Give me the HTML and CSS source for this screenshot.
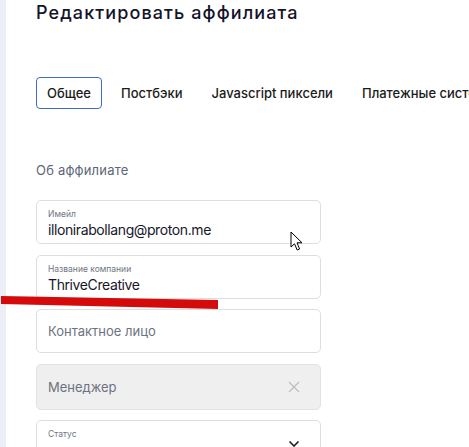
FILE: index.html
```html
<!DOCTYPE html>
<html lang="ru">
<head>
<meta charset="utf-8">
<title>Редактировать аффилиата</title>
<link rel="stylesheet" href="styles.css">
</head>
<body>
<div class="app">
  <aside class="rail"></aside>
  <main class="content">
    <h1 class="title">Редактировать аффилиата</h1>
    <nav class="tabs">
      <span class="tab tab-active">Общее</span>
      <span class="tab">Постбэки</span>
      <span class="tab">Javascript пиксели</span>
      <span class="tab">Платежные системы</span>
    </nav>
    <h2 class="section">Об аффилиате</h2>
    <div class="fields">
      <div class="field field-labeled">
        <span class="field-label">Имейл</span>
        <span class="field-value">illonirabollang@proton.me</span>
      </div>
      <div class="field field-labeled">
        <span class="field-label">Название компании</span>
        <span class="field-value">ThriveCreative</span>
      </div>
      <div class="field">
        <span class="field-placeholder">Контактное лицо</span>
      </div>
      <div class="field field-disabled">
        <span class="field-placeholder">Менеджер</span>
        <svg class="icon-clear" width="12" height="12" viewBox="0 0 12 12"><path d="M1 1L11 11M11 1L1 11" stroke="#bdbdbd" stroke-width="1.2" fill="none"/></svg>
      </div>
      <div class="field field-labeled field-select">
        <span class="field-label">Статус</span>
        <span class="field-value">&nbsp;</span>
        <svg class="icon-chevron" width="12" height="8" viewBox="0 0 12 8"><path d="M1.5 1.5L6 6L10.5 1.5" stroke="#1b1b1b" stroke-width="1.6" fill="none"/></svg>
      </div>
    </div>
  </main>
  <svg class="mark" width="220" height="16" viewBox="0 0 220 16"><polygon points="1,1 218,5 218,14 1,9" fill="#d50b0b"/></svg>
  <svg class="cursor" width="14" height="21" viewBox="0 0 14 21"><path d="M1 1L1 16L4.5 12.8L7.2 19L9.6 18L7 11.8L12 11.8Z" fill="#fff" stroke="#000" stroke-width="1" stroke-linejoin="round"/></svg>
</div>
</body>
</html>
```
FILE: styles.css
```css
* { box-sizing: border-box; }
html, body { margin: 0; padding: 0; background: #fff; }
body { font-family: Inter, "Noto Sans", sans-serif; color: #16162a; }

.app {
  position: relative;
  display: flex;
  width: 469px;
  height: 447px;
  overflow: hidden;
}

.rail {
  flex: 0 0 6px;
  background: #eceff5;
}

.content {
  flex: 1;
  min-width: 0;
  padding: 0 0 0 30px;
  overflow: hidden;
}

.title {
  margin: 0;
  font-size: 18px;
  font-weight: 500;
  line-height: 26px;
  letter-spacing: 1.1px;
  color: #14142b;
}

.tabs {
  display: flex;
  gap: 7px;
  margin-top: 51px;
  white-space: nowrap;
}

.tab {
  display: flex;
  align-items: center;
  height: 32px;
  padding: 0 10px;
  border: 1px solid transparent;
  border-radius: 4px;
  font-size: 13px;
  font-weight: 500;
  color: #1b1b1b;
}

.tab:first-child {
  margin-right: 1px;
}

.tab-active {
  border-color: #3d6cc8;
}

.section {
  margin: 52px 0 0;
  font-size: 13px;
  font-weight: 400;
  line-height: 18px;
  letter-spacing: 0.2px;
  color: #5d6579;
}

.fields {
  display: flex;
  flex-direction: column;
  gap: 10.5px;
  width: 285px;
  margin-top: 21px;
}

.field {
  position: relative;
  display: flex;
  align-items: center;
  height: 44px;
  padding: 0 11px;
  border: 1px solid #dedede;
  border-radius: 5px;
  background: #fff;
}

.field-labeled {
  flex-direction: column;
  align-items: flex-start;
  justify-content: flex-start;
  padding-top: 8px;
}

.field-label {
  font-size: 8.5px;
  line-height: 10px;
  color: #6e7381;
}

.field-value {
  margin-top: 2px;
  font-size: 14px;
  line-height: 17px;
  letter-spacing: -0.4px;
  color: #16162a;
}

.field-placeholder {
  flex: 1;
  font-size: 13px;
  color: #6d7280;
}

.field-disabled {
  height: 46px;
  background: #efefef;
  border-color: #e2e2e2;
}

.icon-clear {
  margin-right: 9px;
}

.icon-chevron {
  position: absolute;
  right: 20px;
  top: 19px;
}

.mark {
  position: absolute;
  left: 0;
  top: 295px;
}

.cursor {
  position: absolute;
  left: 290px;
  top: 231px;
}
```
